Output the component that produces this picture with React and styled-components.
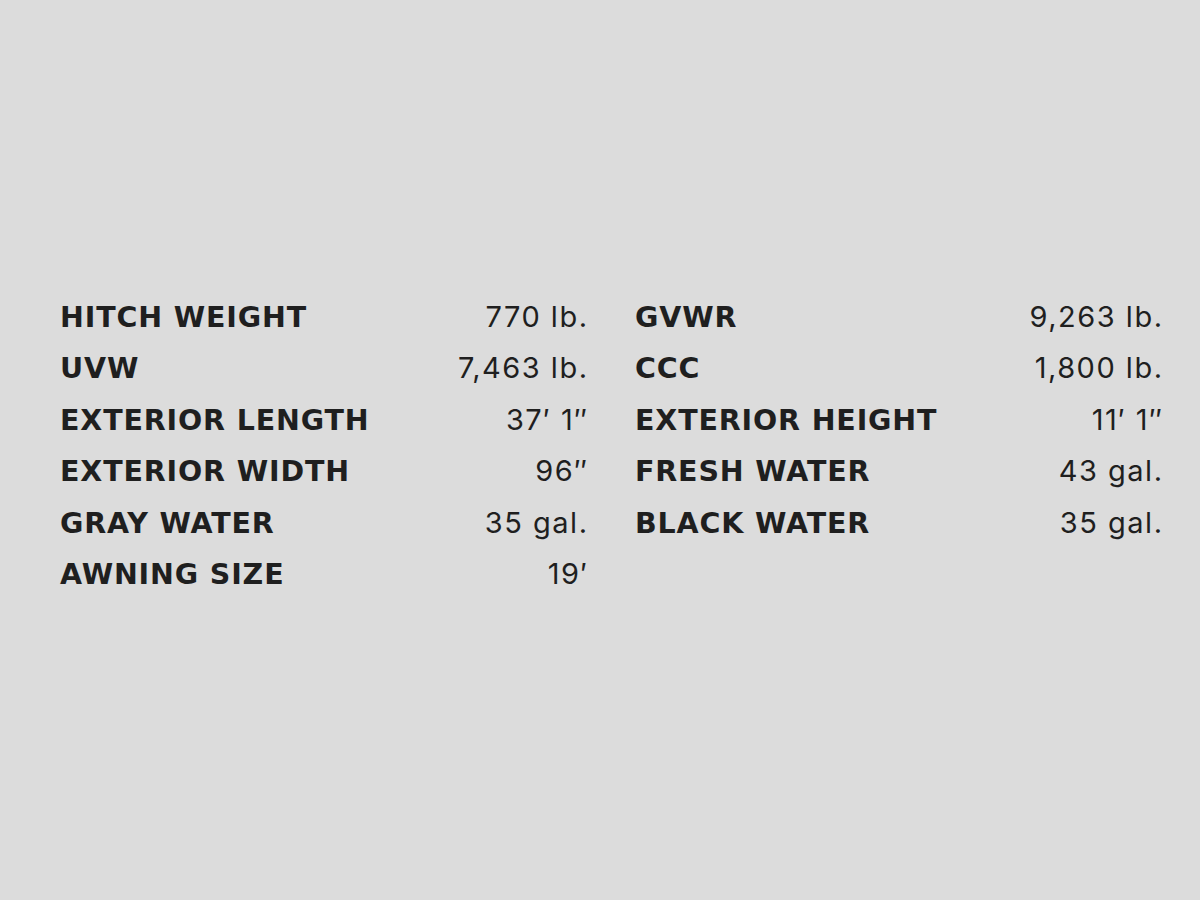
import React from 'react';
import styled, { createGlobalStyle } from 'styled-components';

const GlobalStyle = createGlobalStyle`
  html, body {
    margin: 0;
    padding: 0;
    background: #dcdcdc;
  }
  body {
    font-family: Inter, 'DejaVu Sans', sans-serif;
    color: #1f1f1f;
  }
`;

const SpecsSection = styled.section`
  box-sizing: border-box;
  width: 1200px;
  height: 900px;
  padding: 291px 38px 0 60px;
`;

const SpecsGrid = styled.div`
  display: grid;
  grid-template-columns: 527px 527px;
  column-gap: 48px;
  align-items: start;
`;

const SpecList = styled.dl`
  margin: 0;
  display: flex;
  flex-direction: column;
`;

const SpecRow = styled.div`
  display: flex;
  justify-content: space-between;
  align-items: baseline;
  height: 51.4px;
  line-height: 51.4px;
`;

const Label = styled.dt`
  font-family: 'DejaVu Sans', Inter, sans-serif;
  font-size: 28.5px;
  font-weight: 700;
  letter-spacing: 0.85px;
`;

const Value = styled.dd`
  margin: 0 -1.5px 0 0;
  font-size: 29px;
  font-weight: 400;
  letter-spacing: 1.5px;
`;

const leftSpecs = [
  ['HITCH WEIGHT', '770 lb.'],
  ['UVW', '7,463 lb.'],
  ['EXTERIOR LENGTH', '37\u2032 1\u2033'],
  ['EXTERIOR WIDTH', '96\u2033'],
  ['GRAY WATER', '35 gal.'],
  ['AWNING SIZE', '19\u2032'],
];

const rightSpecs = [
  ['GVWR', '9,263 lb.'],
  ['CCC', '1,800 lb.'],
  ['EXTERIOR HEIGHT', '11\u2032 1\u2033'],
  ['FRESH WATER', '43 gal.'],
  ['BLACK WATER', '35 gal.'],
];

const Specs = ({ items }) => (
  <SpecList>
    {items.map(([label, value]) => (
      <SpecRow key={label}>
        <Label>{label}</Label>
        <Value>{value}</Value>
      </SpecRow>
    ))}
  </SpecList>
);

const App = () => (
  <>
    <GlobalStyle />
    <SpecsSection>
      <SpecsGrid>
        <Specs items={leftSpecs} />
        <Specs items={rightSpecs} />
      </SpecsGrid>
    </SpecsSection>
  </>
);

export default App;
